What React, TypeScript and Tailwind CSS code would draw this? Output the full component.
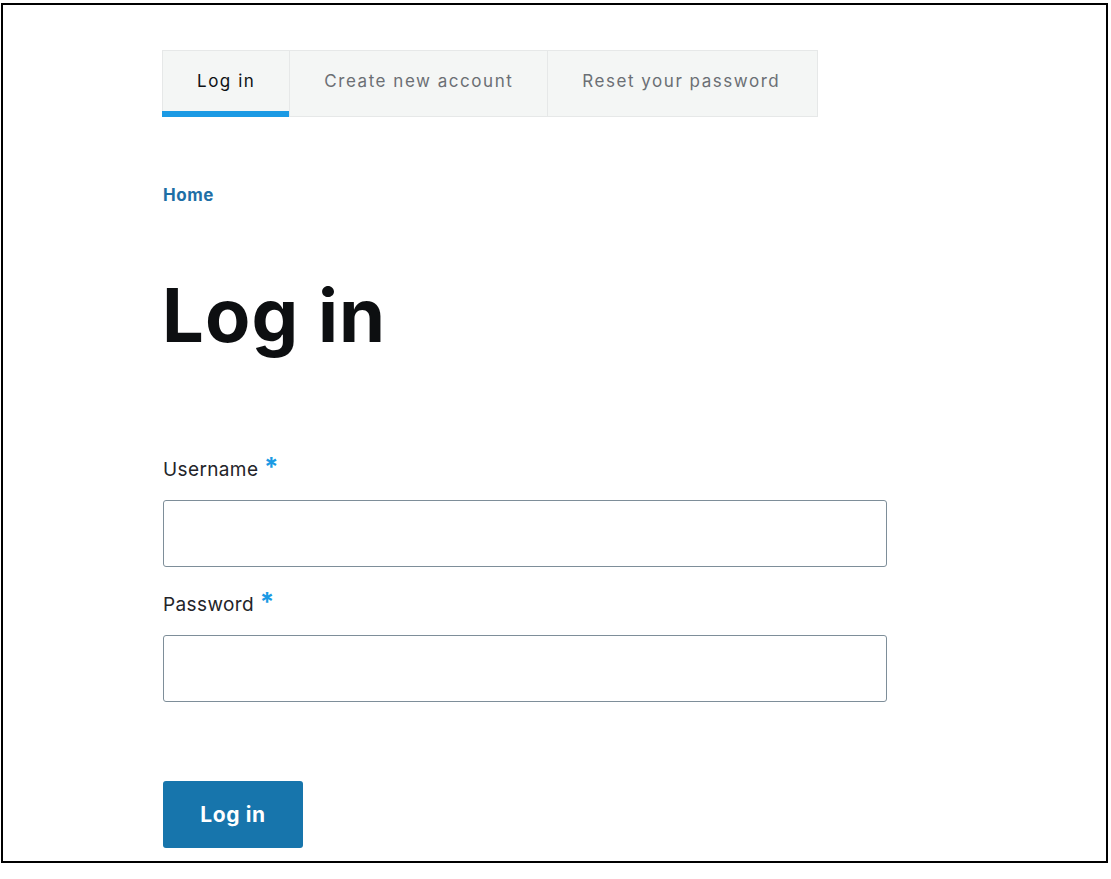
const FONT = { fontFamily: 'Inter, "Noto Sans", "Liberation Sans", sans-serif' }

const TABS = ['Log in', 'Create new account', 'Reset your password']

function Field({ label, id, type }: { label: string; id: string; type: string }) {
  return (
    <div>
      <label htmlFor={id} className="block text-[19px] leading-[27px] tracking-[0.02em] text-[#232429]">
        {label}{' '}
        <span className="text-[26px] font-bold leading-none text-[#1b9ae4]">*</span>
      </label>
      <input
        id={id}
        type={type}
        className="mt-[17px] block h-[67px] w-[724px] rounded-[3px] border border-[#7e8e99] bg-white px-4 outline-none"
      />
    </div>
  )
}

export default function App() {
  return (
    <div className="min-h-[879px] bg-white pt-[3px] pl-[1px]" style={FONT}>
      <div className="h-[860px] w-[1107px] overflow-hidden border-2 border-black pl-[159px] pt-[45px]">
        {/* Tabs */}
        <nav className="flex w-max border border-[#e6e8e8] bg-[#f4f6f5]">
          {TABS.map((tab, i) => (
            <a
              key={tab}
              className={
                i === 0
                  ? 'block h-[66px] border-b-[6px] border-[#1b9ae4] -mb-px -ml-px pl-[35px] pr-[34px] pt-[20px] text-[17px] leading-[20px] tracking-[0.09em] text-[#0f1114]'
                  : i === 1
                    ? 'block h-[65px] border-l border-[#e6e8e8] px-[34px] pt-[20px] text-[17px] leading-[20px] tracking-[0.09em] text-[#6b6f74]'
                    : 'block h-[65px] border-l border-[#e6e8e8] pl-[34px] pr-[37px] pt-[20px] text-[17px] leading-[20px] tracking-[0.09em] text-[#6b6f74]'
              }
            >
              {tab}
            </a>
          ))}
        </nav>

        {/* Breadcrumb */}
        <div className="mt-[66px] pl-px">
          <a className="text-[17px] font-bold leading-[20px] tracking-[0.03em] text-[#1e6fa6]">Home</a>
        </div>

        {/* Title */}
        <h1 className="mt-[63px] text-[74px] font-bold leading-[90px] tracking-[0.015em] text-[#0d0f11]">
          Log in
        </h1>

        {/* Form */}
        <form className="mt-[94px] pl-px">
          <div className="space-y-[22px]">
            <Field label="Username" id="name" type="text" />
            <Field label="Password" id="pass" type="password" />
          </div>
          <button
            type="button"
            className="mt-[79px] h-[67px] w-[140px] rounded-[3px] bg-[#1775ac] text-[21px] font-bold tracking-[0.03em] text-white"
          >
            Log in
          </button>
        </form>
      </div>
    </div>
  )
}
